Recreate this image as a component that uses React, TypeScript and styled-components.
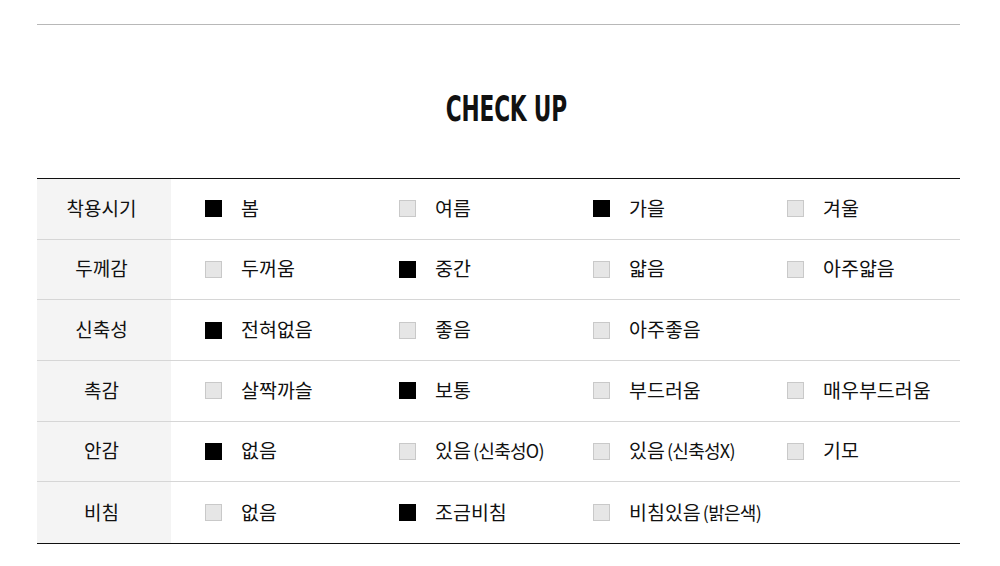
import * as React from 'react';
import styled, { createGlobalStyle } from 'styled-components';

const GlobalStyle = createGlobalStyle`
  html, body {
    margin: 0;
    padding: 0;
    background: #fff;
  }
  body {
    font-family: "Noto Sans CJK KR", "Noto Sans", sans-serif;
    color: #111;
  }
`;

interface Option {
  text: string;
  sub?: string;
  checked?: boolean;
}

interface Row {
  label: string;
  options: Option[];
}

const rows: Row[] = [
  { label: '착용시기', options: [{ text: '봄', checked: true }, { text: '여름' }, { text: '가을', checked: true }, { text: '겨울' }] },
  { label: '두께감', options: [{ text: '두꺼움' }, { text: '중간', checked: true }, { text: '얇음' }, { text: '아주얇음' }] },
  { label: '신축성', options: [{ text: '전혀없음', checked: true }, { text: '좋음' }, { text: '아주좋음' }] },
  { label: '촉감', options: [{ text: '살짝까슬' }, { text: '보통', checked: true }, { text: '부드러움' }, { text: '매우부드러움' }] },
  { label: '안감', options: [{ text: '없음', checked: true }, { text: '있음', sub: '(신축성O)' }, { text: '있음', sub: '(신축성X)' }, { text: '기모' }] },
  { label: '비침', options: [{ text: '없음' }, { text: '조금비침', checked: true }, { text: '비침있음', sub: '(밝은색)' }] },
];

const Page = styled.div`
  width: 923px;
  margin: 0 auto 0 37px;
  padding-top: 24px;
`;

const TopRule = styled.div`
  height: 1px;
  background: #b8b8b8;
`;

const Title = styled.h2`
  margin: 0;
  height: 153px;
  display: flex;
  align-items: center;
  justify-content: center;
  padding-left: 15px;
  font-family: "Liberation Sans Narrow", "DejaVu Sans Condensed", sans-serif;
  font-weight: 700;
  font-size: 36px;
  letter-spacing: -0.3px;
  color: #111;

  span {
    display: inline-block;
    transform: scaleX(0.67);
    padding-top: 14px;
  }
`;

const Table = styled.div`
  height: 366px;
  box-sizing: border-box;
  display: grid;
  grid-template-columns: minmax(0, 1fr);
  grid-template-rows: repeat(6, 1fr);
  border-top: 1px solid #111;
  border-bottom: 1px solid #111;
`;

const TableRow = styled.div<{ $last?: boolean }>`
  display: flex;
  min-width: 0;
  border-bottom: ${(p) => (p.$last ? 'none' : '1px solid #d6d6d6')};
`;

const Label = styled.div`
  width: 134px;
  flex: none;
  box-sizing: border-box;
  padding: 0 5px 3px 0;
  background: #f4f4f4;
  display: flex;
  align-items: center;
  justify-content: center;
  font-size: 19px;
  color: #111;
`;

const Options = styled.div`
  flex: 1;
  min-width: 0;
  display: grid;
  grid-template-columns: 194px 194px 194px 1fr;
  padding-left: 34px;
  padding-bottom: 3px;
  align-items: center;
`;

const Item = styled.div`
  display: flex;
  align-items: center;
  gap: 19px;
  font-size: 19.5px;
  color: #111;
  white-space: nowrap;
`;

const Box = styled.span<{ $checked?: boolean }>`
  width: 17px;
  height: 17px;
  box-sizing: border-box;
  flex: none;
  margin-top: 3px;
  background: ${(p) => (p.$checked ? '#000' : '#e6e6e6')};
  border: 1px solid ${(p) => (p.$checked ? '#000' : '#c9c9c9')};
`;

const Sub = styled.span`
  font-size: 18px;
  letter-spacing: -0.7px;
  margin-left: 2px;
`;

export default function App() {
  return (
    <>
      <GlobalStyle />
      <Page>
        <TopRule />
        <Title><span>CHECK UP</span></Title>
        <Table>
          {rows.map((row, i) => (
            <TableRow key={row.label} $last={i === rows.length - 1}>
              <Label>{row.label}</Label>
              <Options>
                {row.options.map((opt, j) => (
                  <Item key={j}>
                    <Box $checked={opt.checked} />
                    <span>
                      {opt.text}
                      {opt.sub && <Sub>{opt.sub}</Sub>}
                    </span>
                  </Item>
                ))}
              </Options>
            </TableRow>
          ))}
        </Table>
      </Page>
    </>
  );
}
